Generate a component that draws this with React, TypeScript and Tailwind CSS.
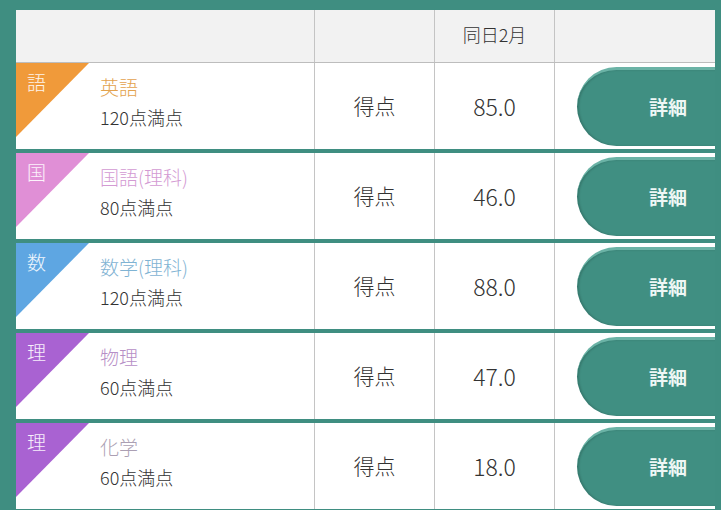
import React from 'react';

const subjects = [
  { tag: '語', name: '英語', full: '120点満点', score: '85.0', tri: 'bg-[#f09a3a]', text: 'text-[#e3a24d]' },
  { tag: '国', name: '国語(理科)', full: '80点満点', score: '46.0', tri: 'bg-[#e08fd6]', text: 'text-[#d39ad3]' },
  { tag: '数', name: '数学(理科)', full: '120点満点', score: '88.0', tri: 'bg-[#5ea6e2]', text: 'text-[#7fb3d3]' },
  { tag: '理', name: '物理', full: '60点満点', score: '47.0', tri: 'bg-[#a962d2]', text: 'text-[#b68ec6]' },
  { tag: '理', name: '化学', full: '60点満点', score: '18.0', tri: 'bg-[#a962d2]', text: 'text-[#ab9fb3]' },
];

export default function App() {
  return (
    <div
      className="h-[510px] w-[721px] overflow-hidden bg-[#3f8e81] pl-[16px] pr-[6px] pt-[10px]"
      style={{ fontFamily: '"Noto Sans CJK JP", "Noto Sans", sans-serif' }}
    >
      {/* Header */}
      <div className="flex h-[53px] border-b border-[#bdbdbd] bg-[#f2f2f2] text-[18px] font-light text-[#333]">
        <div className="w-[299px] border-r border-[#c4c4c4]" />
        <div className="w-[120px] border-r border-[#c4c4c4]" />
        <div className="flex w-[120px] items-start justify-center border-r border-[#c4c4c4] pt-[11px]">同日2月</div>
        <div className="flex-1" />
      </div>

      {/* Rows */}
      <div className="flex flex-col gap-[4px]">
        {subjects.map((s, i) => (
          <div key={i} className="flex h-[86px] bg-white font-light text-[#333]">
            <div className="relative w-[299px] border-r border-[#c4c4c4]">
              <div className={`absolute left-0 top-0 h-[74px] w-[73px] [clip-path:polygon(0_0,100%_0,0_100%)] ${s.tri}`} />
              <span className="absolute left-[11px] top-[9px] text-[19px] leading-none text-white/90">{s.tag}</span>
              <div className="flex flex-col pl-[84px] pt-[11px]">
                <span className={`text-[19px] leading-[26px] ${s.text}`}>{s.name}</span>
                <span className="mt-[5px] text-[18px] leading-[24px] text-[#333]">{s.full}</span>
              </div>
            </div>
            <div className="flex w-[120px] items-center justify-center border-r border-[#c4c4c4] text-[21px]">得点</div>
            <div className="flex w-[120px] items-center justify-center border-r border-[#c4c4c4] text-[23px]">{s.score}</div>
            <div className="flex flex-1 items-center justify-end">
              <div className="flex h-[79px] w-[138px] items-center justify-center rounded-l-[40px] border-t-[3px] border-[#6bb3a6] bg-[#408f82] pl-[48px] pr-[4px] text-[19px] font-bold text-[#eef7f5] shadow-[inset_2px_0_2px_rgba(0,0,0,0.15)]">
                詳細
              </div>
            </div>
          </div>
        ))}
      </div>
    </div>
  );
}
